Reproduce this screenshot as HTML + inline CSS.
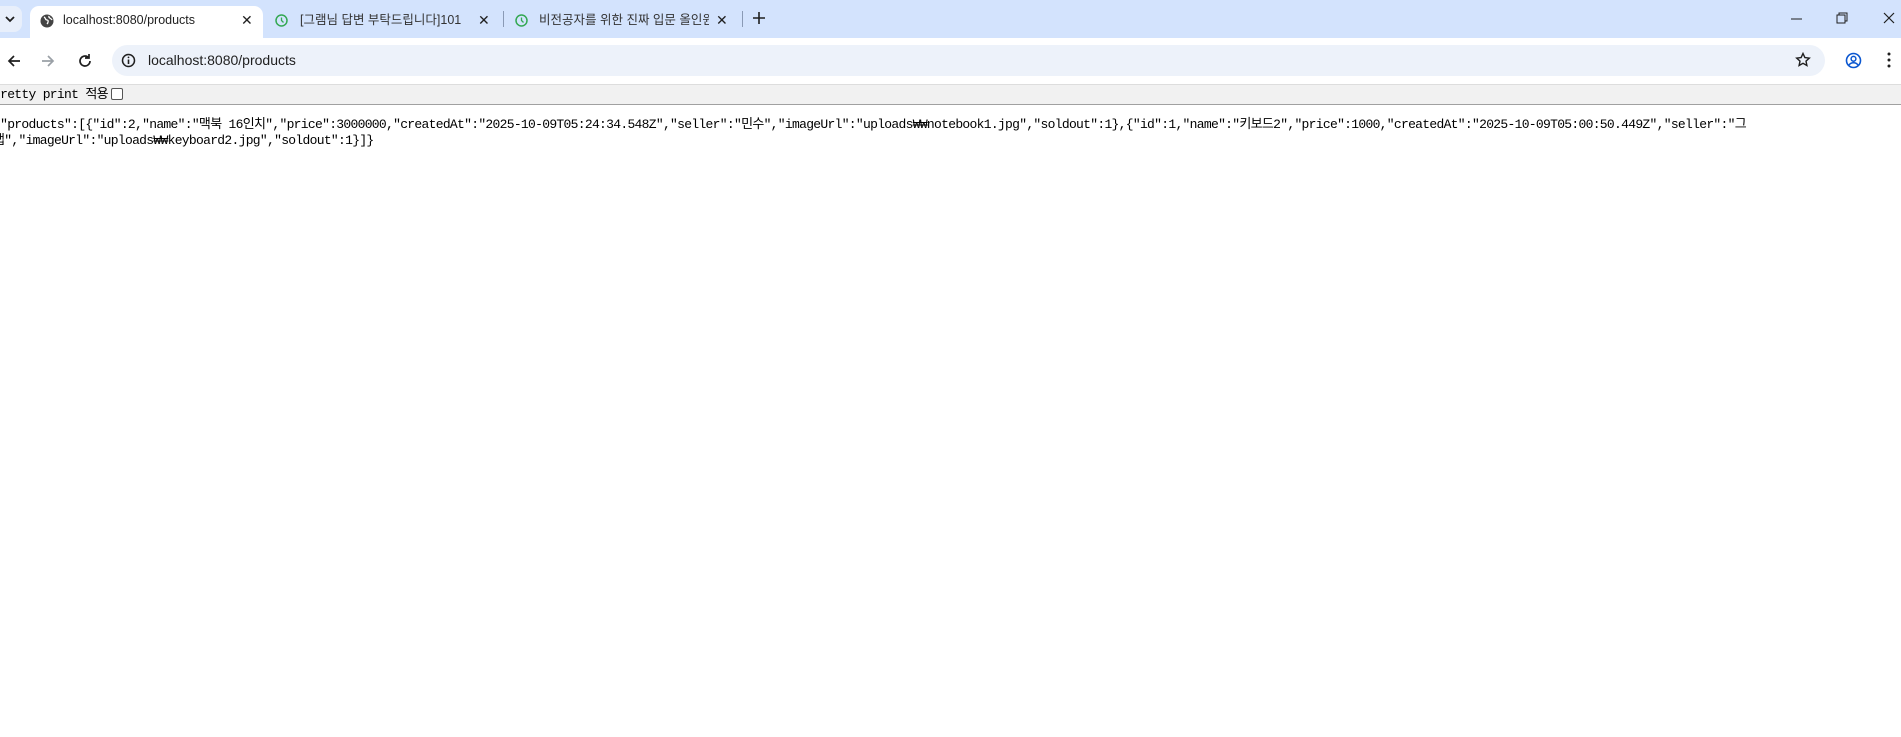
<!DOCTYPE html>
<html><head><meta charset="utf-8"><style>
*{margin:0;padding:0;box-sizing:border-box}
body{width:1901px;height:737px;overflow:hidden;background:#fff;font-family:"Liberation Sans","Noto Sans CJK KR",sans-serif;position:relative}
.tabbar{position:absolute;left:0;top:0;width:1901px;height:38px;background:#d3e3fd}
.tab{position:absolute;top:6px;height:32px;font-size:12.5px;color:#1f1f1f}
.tab span{top:4px;line-height:20px;height:20px}
.active{left:30px;width:233px;background:#fff;border-radius:9px 9px 0 0}
.toolbar{position:absolute;left:0;top:38px;width:1901px;height:46px;background:#fff}
.omni{position:absolute;left:112px;top:7px;width:1713px;height:31px;background:#edf2fa;border-radius:16px}
.pp{position:absolute;left:0;top:84px;width:1901px;height:21px;background:#f1f1f1;border-bottom:1px solid #a0a0a0;border-top:1px solid #ddd;font-family:"Liberation Mono","Noto Sans CJK KR",monospace;font-size:13px;letter-spacing:-0.7px;line-height:20px}
pre{position:absolute;left:-7px;top:117px;font-family:"Liberation Mono","Noto Sans CJK KR",monospace;font-size:13px;letter-spacing:-0.7px;line-height:16px;color:#000;white-space:pre}
svg{position:absolute}
</style></head><body>
<div class="tabbar">
 <div style="position:absolute;left:0;top:6px;width:22px;height:26px;background:#e8effb;border-radius:0 8px 8px 0"></div>
 <svg style="left:4px;top:14px" width="12" height="10"><path d="M2 3l4 4 4-4" stroke="#1f1f1f" stroke-width="1.8" fill="none"/></svg>
 <div class="tab active">
  <svg style="left:10px;top:8px" width="14" height="14" viewBox="0 0 14 14"><circle cx="7" cy="7" r="6.5" fill="#444"/><path d="M4 3c2 1 1 3 3 3s1 3 0 4M9 2c-1 2 2 2 3 4" stroke="#fff" stroke-width="1.3" fill="none"/></svg>
  <span style="position:absolute;left:33px">localhost:8080/products</span>
  <span style="position:absolute;left:211px;font-size:14px">✕</span>
 </div>
 <div class="tab" style="left:275px;width:220px">
  <svg style="left:0;top:8px" width="13" height="13"><circle cx="6.5" cy="6.5" r="5.5" stroke="#34a853" stroke-width="1.5" fill="none"/><path d="M6.5 3.5v3l2 2" stroke="#34a853" stroke-width="1.3" fill="none"/></svg>
  <span style="position:absolute;left:25px;width:170px;overflow:hidden;white-space:nowrap;color:#333">[그램님 답변 부탁드립니다]101</span>
  <span style="position:absolute;left:203px;font-size:14px">✕</span>
 </div>
 <div style="position:absolute;left:503px;top:11px;width:1px;height:16px;background:#8a9ab5"></div>
 <div class="tab" style="left:515px;width:220px">
  <svg style="left:0;top:8px" width="13" height="13"><circle cx="6.5" cy="6.5" r="5.5" stroke="#34a853" stroke-width="1.5" fill="none"/><path d="M6.5 3.5v3l2 2" stroke="#34a853" stroke-width="1.3" fill="none"/></svg>
  <span style="position:absolute;left:24px;width:170px;overflow:hidden;white-space:nowrap;color:#333">비전공자를 위한 진짜 입문 올인원</span>
  <span style="position:absolute;left:201px;font-size:14px">✕</span>
 </div>
 <div style="position:absolute;left:742px;top:11px;width:1px;height:16px;background:#8a9ab5"></div>
 <svg style="left:752px;top:11px" width="14" height="14"><path d="M7 1v12M1 7h12" stroke="#1f1f1f" stroke-width="1.6"/></svg>
 <svg style="left:1791px;top:18px" width="11" height="2"><path d="M0 1h11" stroke="#1f1f1f"/></svg>
 <svg style="left:1836px;top:12px" width="12" height="12"><rect x="1" y="3" width="8" height="8" stroke="#1f1f1f" fill="none"/><path d="M3 3V1h8v8H9" stroke="#1f1f1f" fill="none"/></svg>
 <svg style="left:1883px;top:12px" width="12" height="12"><path d="M1 1l10 10M11 1L1 11" stroke="#1f1f1f" stroke-width="1.2"/></svg>
</div>
<div class="toolbar">
 <svg style="left:6px;top:15px" width="16" height="16"><path d="M14 8H3M8 3L3 8l5 5" stroke="#1f1f1f" stroke-width="1.7" fill="none"/></svg>
 <svg style="left:40px;top:15px" width="16" height="16"><path d="M2 8h11M8 3l5 5-5 5" stroke="#9aa0a6" stroke-width="1.7" fill="none"/></svg>
 <svg style="left:77px;top:15px" width="16" height="16"><path d="M13 8a5 5 0 1 1-2-4M12 1v4H8" stroke="#1f1f1f" stroke-width="1.7" fill="none"/></svg>
 <div class="omni">
  <svg style="left:9px;top:8px" width="15" height="15"><circle cx="7.5" cy="7.5" r="6" stroke="#1f1f1f" stroke-width="1.5" fill="none"/><path d="M7.5 6.5v4.5" stroke="#1f1f1f" stroke-width="1.6"/><circle cx="7.5" cy="4.4" r="0.9" fill="#1f1f1f"/></svg>
  <span style="position:absolute;left:36px;top:7px;font-size:14px;color:#1f1f1f">localhost:8080/products</span>
  <svg style="left:1683px;top:7px" width="16" height="16"><path d="M8 1.5l1.9 4.1 4.4.5-3.3 3 .9 4.4L8 11.3 4.1 13.5 5 9.1 1.7 6.1l4.4-.5z" stroke="#1f1f1f" stroke-width="1.4" fill="none"/></svg>
 </div>
 <svg style="left:1845px;top:14px" width="17" height="17"><circle cx="8.5" cy="8.5" r="7" stroke="#0b57d0" stroke-width="1.6" fill="none"/><circle cx="8.5" cy="6.8" r="2.4" stroke="#0b57d0" stroke-width="1.5" fill="none"/><path d="M4 13c2-3 7-3 9 0" stroke="#0b57d0" stroke-width="1.5" fill="none"/></svg>
 <svg style="left:1887px;top:14px" width="4" height="16"><circle cx="2" cy="2" r="1.5" fill="#1f1f1f"/><circle cx="2" cy="8" r="1.5" fill="#1f1f1f"/><circle cx="2" cy="14" r="1.5" fill="#1f1f1f"/></svg>
</div>
<div class="pp"><span style="margin-left:-7px">pretty print 적용</span><span style="display:inline-block;width:12px;height:12px;border:1px solid #555;border-radius:2px;background:#fff;vertical-align:-2px;margin-left:3px"></span></div>
<pre>{"products":[{"id":2,"name":"맥북 16인치","price":3000000,"createdAt":"2025-10-09T05:24:34.548Z","seller":"민수","imageUrl":"uploads₩₩notebook1.jpg","soldout":1},{"id":1,"name":"키보드2","price":1000,"createdAt":"2025-10-09T05:00:50.449Z","seller":"그
랩","imageUrl":"uploads₩₩keyboard2.jpg","soldout":1}]}</pre>
</body></html>
